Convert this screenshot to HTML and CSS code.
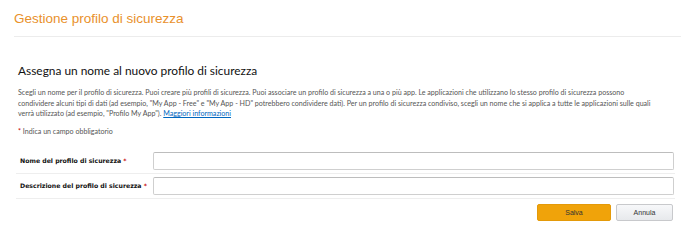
FILE: index.html
```html
<!DOCTYPE html>
<html lang="it">
<head>
<meta charset="utf-8">
<title>Gestione profilo di sicurezza</title>
<link rel="stylesheet" href="styles.css">
</head>
<body>
<div class="page">
  <header class="page-header">
    <h1 class="page-title">Gestione profilo di sicurezza</h1>
  </header>
  <section class="content">
    <h2 class="section-title">Assegna un nome al nuovo profilo di sicurezza</h2>
    <p class="intro">Scegli un nome per il profilo di sicurezza. Puoi creare più profili di sicurezza. Puoi associare un profilo di sicurezza a una o più app. Le applicazioni che utilizzano lo stesso profilo di sicurezza possono condividere alcuni tipi di dati (ad esempio, "My App - Free" e "My App - HD" potrebbero condividere dati). Per un profilo di sicurezza condiviso, scegli un nome che si applica a tutte le applicazioni sulle quali verrà utilizzato (ad esempio, "Profilo My App"). <a href="#" class="link">Maggiori informazioni</a></p>
    <p class="required-note"><span class="req">*</span> Indica un campo obbligatorio</p>
    <form class="form">
      <div class="form-row">
        <label class="form-label" for="name">Nome del profilo di sicurezza <span class="req">*</span></label>
        <input class="form-input" id="name" type="text">
      </div>
      <div class="form-row">
        <label class="form-label" for="desc">Descrizione del profilo di sicurezza <span class="req">*</span></label>
        <input class="form-input" id="desc" type="text">
      </div>
      <div class="form-actions">
        <button type="button" class="btn btn-primary">Salva</button>
        <button type="button" class="btn btn-secondary">Annula</button>
      </div>
    </form>
  </section>
</div>
</body>
</html>
```

FILE: styles.css
```css
* { box-sizing: border-box; }
html, body { margin: 0; padding: 0; background: #fff; }
.page { padding: 0 15px 0 14px; }
.page-header {
  border-bottom: 1px solid #ececec;
  padding-top: 10px;
  height: 37px;
}
.page-title {
  margin: 0;
  font-family: "Liberation Sans", Arial, sans-serif;
  font-weight: normal;
  font-size: 13.5px;
  line-height: 18px;
  color: #e9912c;
}
.content { padding: 0 6px 0 4px; }
.section-title {
  margin: 26px 0 0;
  font-family: Lato, "Open Sans", sans-serif;
  font-weight: normal;
  font-size: 11.9px;
  line-height: 16px;
  color: #111;
}
.intro {
  margin: 9px 0 0;
  padding-right: 15px;
  font-family: Lato, "Open Sans", sans-serif;
  font-size: 7.1px;
  line-height: 10.5px;
  color: #555;
}
.link { color: #0066c0; text-decoration: underline; }
.required-note {
  margin: 7px 0 0;
  font-family: Lato, "Open Sans", sans-serif;
  font-size: 7.1px;
  line-height: 10px;
  color: #555;
}
.req { color: #c40000; }
.form { margin-top: 12px; }
.form-row {
  display: flex;
  align-items: center;
  padding: 3px 0;
  border-bottom: 1px solid #eeeeee;
  margin-left: -2px;
}
.form-label {
  width: 137px;
  padding-left: 4px;
  white-space: nowrap;
  font-family: "DejaVu Sans", Verdana, sans-serif;
  font-weight: bold;
  font-size: 6.2px;
  color: #111;
}
.form-input {
  flex: 1;
  height: 18px;
  border: 1px solid #cfcfcf;
  border-top-color: #bdbdbd;
  border-radius: 2px;
  background: #fff;
  margin: 0 1px 0 0;
}
.form-actions {
  display: flex;
  justify-content: flex-end;
  gap: 5px;
  padding: 5px 2px 0 0;
}
.btn {
  height: 17px;
  border-radius: 2px;
  font-family: "Liberation Sans", Arial, sans-serif;
  font-size: 7px;
  padding: 0;
  margin: 0;
}
.btn-primary {
  width: 74px;
  background: #f0a30a;
  border: 1px solid #e49a09;
  color: #333;
}
.btn-secondary {
  width: 57px;
  background: linear-gradient(#f7f8fa, #e7e9ec);
  border: 1px solid #c8c9cc;
  color: #333;
}
```
